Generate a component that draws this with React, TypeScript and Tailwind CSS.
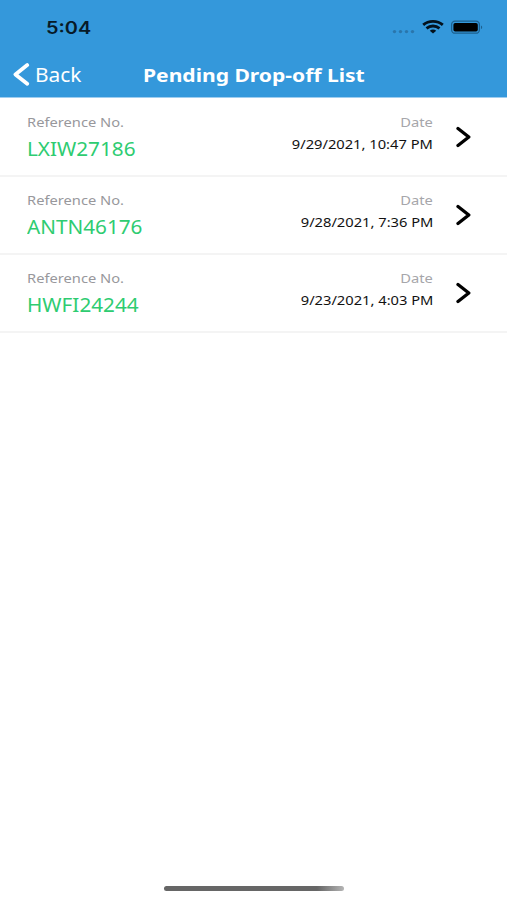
import { FC } from "react";

interface DropOff {
  reference: string;
  date: string;
}

const dropOffs: DropOff[] = [
  { reference: "LXIW27186", date: "9/29/2021, 10:47 PM" },
  { reference: "ANTN46176", date: "9/28/2021, 7:36 PM" },
  { reference: "HWFI24244", date: "9/23/2021, 4:03 PM" },
];

const StatusBar: FC = () => {
  return (
    <div className="flex h-[54px] items-center justify-between pl-[46px] pr-6">
      <span className="origin-left scale-x-[1.17] pt-0.5 font-[Inter,sans-serif] text-[17px] font-semibold leading-none text-[#071a28]">
        5:04
      </span>
      <svg width="92" height="16" viewBox="0 0 92 16" fill="none">
        <g fill="#2a76ac">
          <circle cx="3.5" cy="12.6" r="1.7" />
          <circle cx="9.5" cy="12.6" r="1.7" />
          <circle cx="15.5" cy="12.6" r="1.7" />
          <circle cx="21.5" cy="12.6" r="1.7" />
        </g>
        <g stroke="#04121d" strokeWidth="2.8">
          <path d="M32.2 5.9C37.6 1.2 46.4 1.2 51.8 5.9" />
          <path d="M35.5 9.4C39.3 6.2 44.7 6.2 48.5 9.4" />
        </g>
        <path d="M38.8 11.7C40.6 10.2 43.4 10.2 45.2 11.7L42 14.6Z" fill="#04121d" />
        <rect x="60.6" y="2.2" width="27.8" height="12" rx="3.5" stroke="#1d608f" strokeWidth="1.3" />
        <rect x="62.4" y="3.9" width="24.4" height="8.6" rx="1.8" fill="#000" />
        <path d="M90 6.5C91.6 7 91.6 9.6 90 10.1Z" fill="#1d608f" />
      </svg>
    </div>
  );
};

const Header: FC = () => {
  return (
    <header className="h-[98px] border-b border-[#9fcdef] bg-[#3498db]">
      <StatusBar />
      <div className="grid h-[42px] grid-cols-[143px_1fr] items-center text-white">
        <button className="flex items-center pl-3">
          <svg width="18" height="24" viewBox="0 0 18 24" fill="none" stroke="currentColor" strokeWidth="3.8" strokeLinecap="round" strokeLinejoin="round">
            <path d="M15.2 2.1L3.4 11.4L15.2 20.7" />
          </svg>
          <span className="ml-[5px] origin-left scale-x-[1.1] pt-px text-[19px] leading-none">Back</span>
        </button>
        <h1 className="origin-left justify-self-start scale-x-[1.17] whitespace-nowrap text-[18px] font-bold leading-none">
          Pending Drop-off List
        </h1>
      </div>
    </header>
  );
};

const DropOffRow: FC<DropOff> = ({ reference, date }) => {
  return (
    <li className="flex h-[78px] items-start border-b-2 border-[#f4f4f4] pl-[27px] pr-9">
      <div className="flex flex-1 flex-col items-start pt-[13px]">
        <span className="origin-left scale-x-[1.13] text-[13px] leading-5 text-[#98989c]">Reference No.</span>
        <span className="mt-[3px] origin-left scale-x-[1.09] text-[19px] leading-7 text-[#2ecc71]">{reference}</span>
      </div>
      <div className="flex flex-col items-end pt-[13px]">
        <span className="origin-right scale-x-[1.13] text-[13px] leading-5 text-[#a6a6aa]">Date</span>
        <span className="mt-[2px] origin-right scale-x-[1.13] whitespace-nowrap text-[13px] leading-5 text-[#111]">{date}</span>
      </div>
      <svg className="ml-[22px] mt-[27px]" width="16" height="22" viewBox="0 0 16 22" fill="none" stroke="#000" strokeWidth="3.3" strokeLinecap="round" strokeLinejoin="round">
        <path d="M3 2.5L13.8 11L3 19.5" />
      </svg>
    </li>
  );
};

const App: FC = () => {
  return (
    <div className="flex h-[900px] w-[507px] flex-col overflow-hidden bg-white font-['Noto_Sans',sans-serif]">
      <Header />
      <ul className="flex-1 pt-px">
        {dropOffs.map((dropOff) => (
          <DropOffRow key={dropOff.reference} {...dropOff} />
        ))}
      </ul>
      <div className="mb-[9px] ml-[164px] h-[5px] w-[180px] rounded-full bg-linear-to-r from-[#666] from-85% to-[#b5b5b5]" />
    </div>
  );
};

export default App;
